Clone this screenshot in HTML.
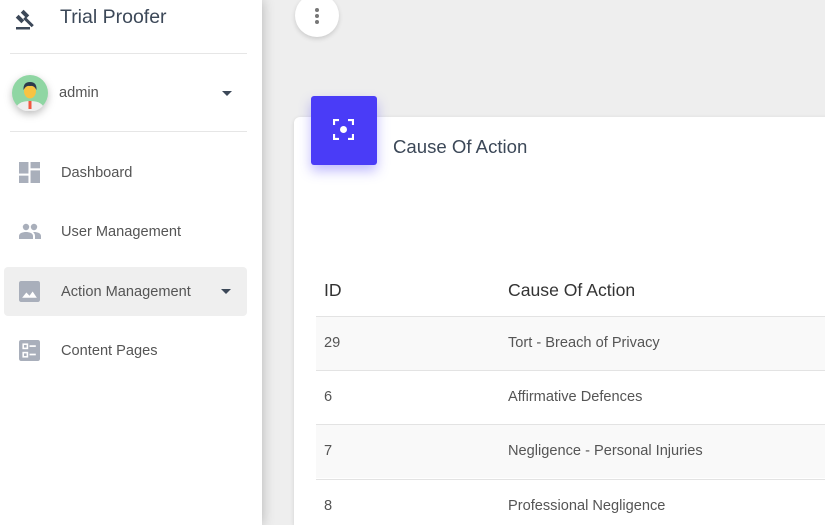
<!DOCTYPE html>
<html style="width:825px;height:525px;overflow:hidden"><head><style>
*{margin:0;padding:0;box-sizing:border-box}
body{width:825px;height:525px;overflow:hidden;background:#eeeeee;font-family:"Liberation Sans",sans-serif;position:relative}
.sb{position:absolute;left:0;top:0;width:262px;height:525px;background:#fff;box-shadow:0 0 12px rgba(0,0,0,.25);z-index:2}
.t{position:absolute;font-size:14.6px;color:#3c4858}
.hr{position:absolute;left:10px;width:237px;height:1px;background:#e6e6e6}
.card{position:absolute;left:294px;top:117px;width:540px;height:408px;background:#fff;border-radius:6px 0 0 0;box-shadow:0 1px 4px rgba(0,0,0,.12)}
.row{position:absolute;left:316px;width:509px;height:54px;border-top:1px solid #e3e3e3}
.c{position:absolute;font-size:14.6px;color:#555}
</style></head><body>
<div class="sb">
<svg style="position:absolute;left:15px;top:8px" width="24" height="24" viewBox="0 0 24 24"><g fill="#3c4858"><rect x="1" y="19" width="14" height="2.5"/><rect x="8" y="2" width="4" height="8" transform="rotate(-45 10 6)"/><rect x="3" y="7" width="4" height="8" transform="rotate(-45 5 11)"/><rect x="12" y="8" width="3" height="12" transform="rotate(-45 13.5 14)"/></g></svg>
<div class="t" style="left:60px;top:6px;font-size:19.5px">Trial Proofer</div>
<div class="hr" style="top:53px"></div>
<svg style="position:absolute;left:12px;top:75px;filter:drop-shadow(0 3px 4px rgba(0,0,0,.25))" width="36" height="36" viewBox="0 0 36 36"><circle cx="18" cy="18" r="18" fill="#8fd6a3"/><path d="M5 31 Q8 26 18 26 Q28 26 31 31 A18 18 0 0 1 5 31Z" fill="#eee"/><rect x="16.5" y="26" width="3" height="8" fill="#f0573f"/><ellipse cx="18" cy="16" rx="6" ry="7.5" fill="#f7c342"/><path d="M11.5 15 Q11 7 18 7 Q25 7 24.5 15 Q22 10 18 11 Q14 10 11.5 15Z" fill="#2d3a4b"/></svg>
<div class="t" style="left:59px;top:85px;color:#555">admin</div>
<div style="position:absolute;left:222px;top:91px;border:5px solid transparent;border-top-color:#3c4858;border-bottom:0"></div>
<div class="hr" style="top:131px"></div>
<svg style="position:absolute;left:19px;top:162px" width="21" height="21" viewBox="0 0 20 20" fill="#a9afbb"><rect x="0" y="0" width="9" height="11"/><rect x="11" y="0" width="9" height="6"/><rect x="11" y="8" width="9" height="12"/><rect x="0" y="13" width="9" height="7"/></svg>
<div class="t" style="left:61px;top:165px;color:#555">Dashboard</div>
<svg style="position:absolute;left:19px;top:223px" width="22" height="16" viewBox="0 0 22 16" fill="#a9afbb"><circle cx="7" cy="4" r="3.2"/><circle cx="15" cy="4" r="3.2"/><path d="M0 16v-3c0-3 4-4 7-4s7 1 7 4v3z"/><path d="M15 9c3 0 7 1 7 4v3h-6v-3c0-2-1-3-2-4z"/></svg>
<div class="t" style="left:61px;top:224px;color:#555">User Management</div>
<div style="position:absolute;left:4px;top:267px;width:243px;height:49px;background:#efefef;border-radius:4px"></div>
<svg style="position:absolute;left:19px;top:281px" width="21" height="21" viewBox="0 0 20 20"><rect width="20" height="20" rx="2" fill="#a9afbb"/><path d="M3 16l4-5 3 3 3-4 4 6z" fill="#fff"/></svg>
<div class="t" style="left:61px;top:284px;color:#555">Action Management</div>
<div style="position:absolute;left:221px;top:289px;border:5px solid transparent;border-top-color:#3c4858;border-bottom:0"></div>
<svg style="position:absolute;left:19px;top:340px" width="21" height="21" viewBox="0 0 20 20"><rect width="20" height="20" rx="2" fill="#a9afbb"/><g fill="none" stroke="#fff" stroke-width="1.5"><rect x="4" y="4" width="4" height="4"/><rect x="4" y="12" width="4" height="4"/></g><rect x="10" y="5" width="6" height="1.6" fill="#fff"/><rect x="10" y="13" width="6" height="1.6" fill="#fff"/></svg>
<div class="t" style="left:61px;top:343px;color:#555">Content Pages</div>
</div>
<div style="position:absolute;left:295px;top:-6px;width:44px;height:43px;border-radius:50%;background:#fff;box-shadow:0 2px 5px rgba(0,0,0,.15)"></div>
<div style="position:absolute;left:315px;top:8px;width:4px;height:4px;border-radius:50%;background:#777;box-shadow:0 6px 0 #777,0 12px 0 #777"></div>
<div class="card"></div>
<div style="position:absolute;left:311px;top:96px;width:66px;height:69px;background:#4a3cf7;border-radius:3px;box-shadow:0 6px 12px rgba(74,60,247,.35)"></div>
<svg style="position:absolute;left:333px;top:119px" width="21" height="21" viewBox="0 0 21 21" fill="none" stroke="#fff" stroke-width="2.2"><path d="M1 6V1h5M15 1h5v5M20 15v5h-5M6 20H1v-5"/><circle cx="10.5" cy="10.5" r="3.5" fill="#fff" stroke="none"/></svg>
<div class="t" style="left:393px;top:136px;font-size:18.6px;color:#3c4858">Cause Of Action</div>
<div class="c" style="left:324px;top:280px;font-size:17.6px;color:#333">ID</div>
<div class="c" style="left:508px;top:280px;font-size:17.6px;color:#333">Cause Of Action</div>
<div class="row" style="top:316px;background:#f9f9f9"></div>
<div class="row" style="top:370px"></div>
<div class="row" style="top:424px;background:#f9f9f9"></div>
<div class="row" style="top:479px"></div>
<div class="c" style="left:324px;top:335px">29</div><div class="c" style="left:508px;top:335px">Tort - Breach of Privacy</div>
<div class="c" style="left:324px;top:389px">6</div><div class="c" style="left:508px;top:389px">Affirmative Defences</div>
<div class="c" style="left:324px;top:443px">7</div><div class="c" style="left:508px;top:443px">Negligence - Personal Injuries</div>
<div class="c" style="left:324px;top:498px">8</div><div class="c" style="left:508px;top:498px">Professional Negligence</div>
</body></html>
